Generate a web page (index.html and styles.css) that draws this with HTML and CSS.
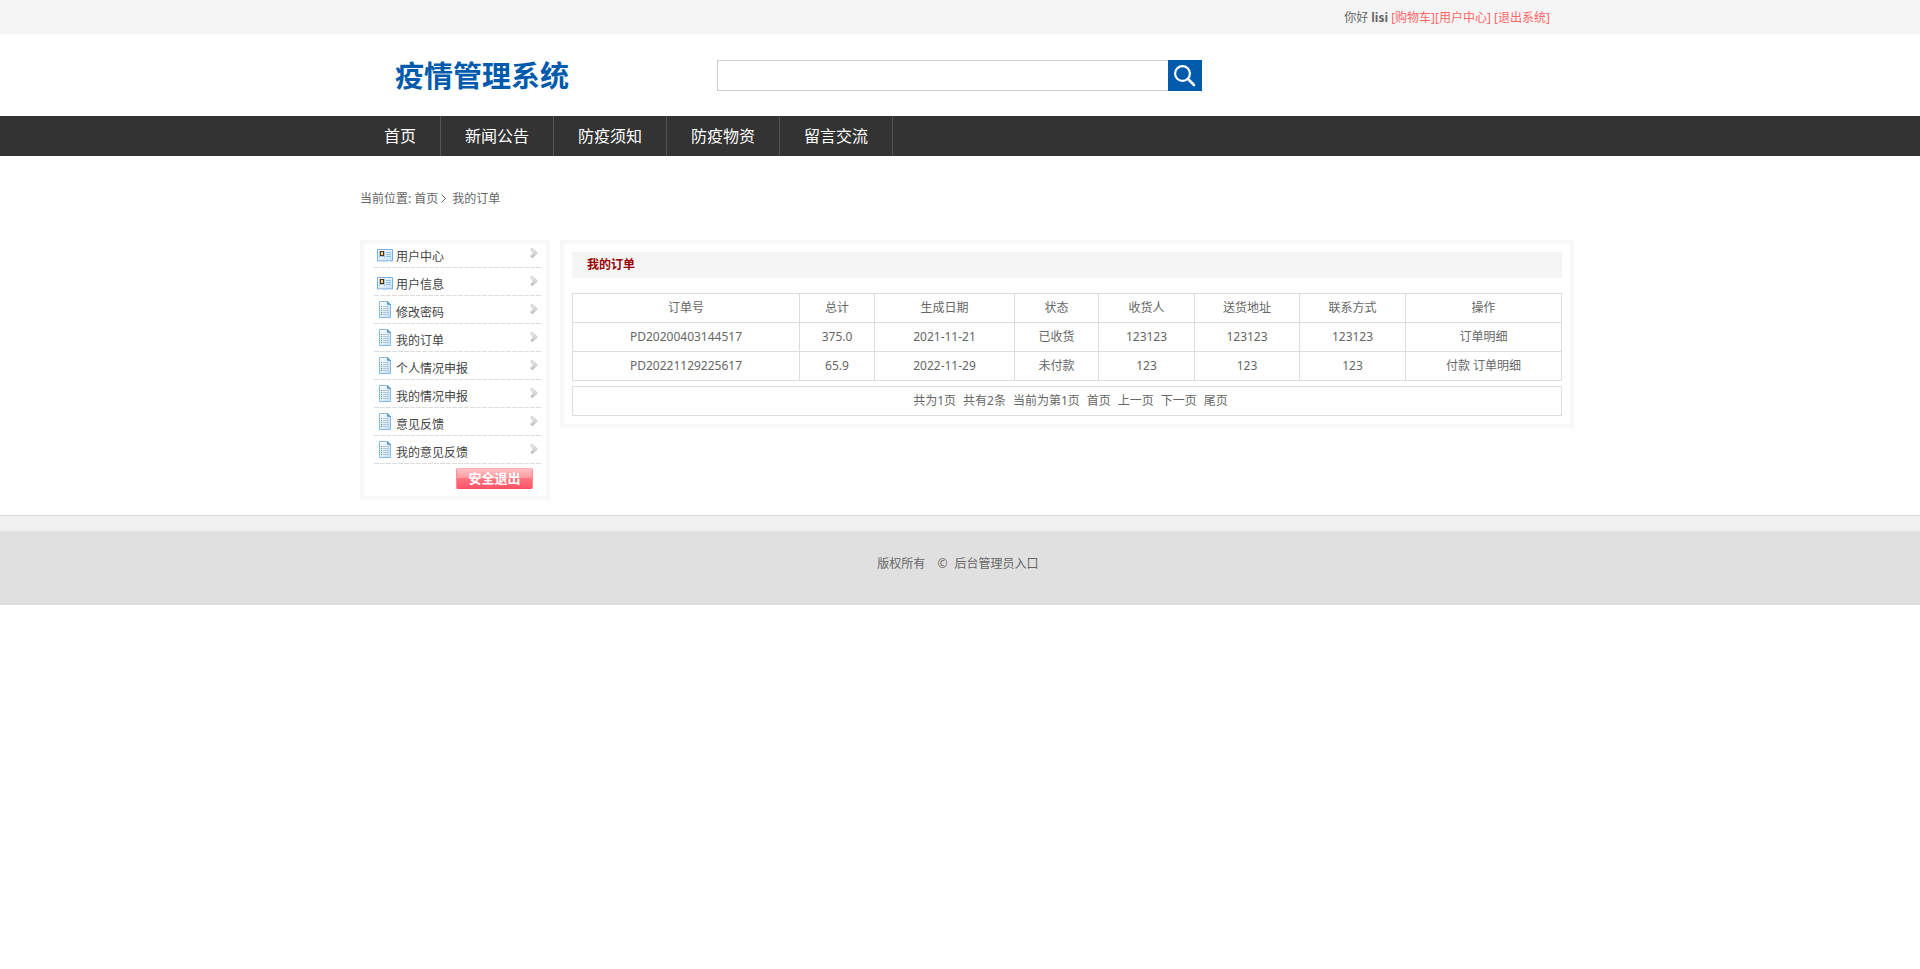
FILE: index.html
```html
<!DOCTYPE html>
<html lang="zh-CN">
<head>
  <meta charset="UTF-8" />
  <meta name="viewport" content="width=device-width, initial-scale=1.0"/>
  <title>疫情管理系统</title>
  <link rel="stylesheet" href="styles.css">
</head>
<body>
  <!-- shared icons -->
  <svg class="sprite" aria-hidden="true">
    <defs>
      <linearGradient id="paper" x1="0" y1="0" x2="1" y2="1">
        <stop offset="0" stop-color="#ffffff"/>
        <stop offset="1" stop-color="#c2e0fa"/>
      </linearGradient>
      <linearGradient id="silver" x1="0" y1="0" x2="0" y2="1">
        <stop offset="0" stop-color="#ececec"/>
        <stop offset="1" stop-color="#c0c0c0"/>
      </linearGradient>
    </defs>
    <symbol id="icon-card" viewBox="0 0 16 13">
      <path d="M.5.5h15v11.5h-2l-1-1-1 1h-7l-1-1-1 1h-2z" fill="url(#paper)" stroke="#78aee0"/>
      <rect x="2" y="2" width="6" height="7" fill="#9cc8ef"/>
      <rect x="3" y="2" width="4" height="5" fill="#4a3620"/>
      <rect x="4" y="3" width="2" height="3" fill="#ffd88a"/>
      <path d="M3 8.500h4" stroke="#fff"/>
      <path d="M9 3.500h5M9 5.500h5M9 7.500h5" stroke="#92bfe8"/>
    </symbol>
    <symbol id="icon-doc" viewBox="0 0 16 17">
      <path d="M2.500.5h8l3 3v13h-11z" fill="url(#paper)" stroke="#86b8e6"/>
      <path d="M10.500.5v3h3z" fill="#5f9bd3" stroke="#5f9bd3"/>
      <path d="M4 5.500h1M4 7.500h1M4 9.500h1M4 11.500h1M4 13.500h1" stroke="#3f9d58"/>
      <path d="M6 5.500h6M6 7.500h6M6 9.500h6M6 11.500h6M6 13.500h6" stroke="#b4c8da"/>
    </symbol>
    <symbol id="icon-arrow" viewBox="0 0 8 10">
      <path d="M1 .5h2l4.500 4.500L3 9.500H1v-2l2.500-2.500L1 2.500z" fill="url(#silver)" stroke="#c4c4c4" stroke-width=".6"/>
    </symbol>
  </svg>

  <div class="topbar">
    <div class="container topbar-inner">
      <p>你好 <b>lisi</b> <a href="#">[购物车]</a><a href="#">[用户中心]</a> <a href="#">[退出系统]</a></p>
    </div>
  </div>

  <header class="container header">
    <h1 class="logo">疫情管理系统</h1>
    <form class="search">
      <input type="text" name="keyword" aria-label="搜索" />
      <button type="submit" aria-label="搜索">
        <svg width="34" height="31" viewBox="0 0 34 31">
          <circle cx="14.500" cy="13.500" r="7.400" fill="none" stroke="#fff" stroke-width="2.200"/>
          <path d="M20 19l6 6" stroke="#fff" stroke-width="2.600" stroke-linecap="round"/>
        </svg>
      </button>
    </form>
  </header>

  <nav class="nav">
    <div class="container nav-inner">
      <a href="#">首页</a>
      <a href="#">新闻公告</a>
      <a href="#">防疫须知</a>
      <a href="#">防疫物资</a>
      <a href="#">留言交流</a>
    </div>
  </nav>

  <div class="container">
    <div class="breadcrumb">
      <span>当前位置:</span>
      <a href="#">首页</a>
      <svg width="5" height="9" viewBox="0 0 5 9"><path d="M.5.5l4 4-4 4" fill="none" stroke="#666"/></svg>
      <span class="current">我的订单</span>
    </div>

    <div class="content">
      <aside class="sidebar">
        <ul>
          <li><a href="#"><svg class="icon-card"><use href="#icon-card"/></svg><span>用户中心</span><svg class="arrow"><use href="#icon-arrow"/></svg></a></li>
          <li><a href="#"><svg class="icon-card"><use href="#icon-card"/></svg><span>用户信息</span><svg class="arrow"><use href="#icon-arrow"/></svg></a></li>
          <li><a href="#"><svg class="icon-doc"><use href="#icon-doc"/></svg><span>修改密码</span><svg class="arrow"><use href="#icon-arrow"/></svg></a></li>
          <li><a href="#"><svg class="icon-doc"><use href="#icon-doc"/></svg><span>我的订单</span><svg class="arrow"><use href="#icon-arrow"/></svg></a></li>
          <li><a href="#"><svg class="icon-doc"><use href="#icon-doc"/></svg><span>个人情况申报</span><svg class="arrow"><use href="#icon-arrow"/></svg></a></li>
          <li><a href="#"><svg class="icon-doc"><use href="#icon-doc"/></svg><span>我的情况申报</span><svg class="arrow"><use href="#icon-arrow"/></svg></a></li>
          <li><a href="#"><svg class="icon-doc"><use href="#icon-doc"/></svg><span>意见反馈</span><svg class="arrow"><use href="#icon-arrow"/></svg></a></li>
          <li><a href="#"><svg class="icon-doc"><use href="#icon-doc"/></svg><span>我的意见反馈</span><svg class="arrow"><use href="#icon-arrow"/></svg></a></li>
        </ul>
        <button type="button" class="logout-btn">安全退出</button>
      </aside>

      <main class="panel">
        <h2>我的订单</h2>
        <table class="orders">
          <colgroup>
            <col class="col-no"><col class="col-total"><col class="col-date"><col class="col-status">
            <col class="col-name"><col class="col-address"><col class="col-phone"><col class="col-action">
          </colgroup>
          <thead>
            <tr>
              <th>订单号</th>
              <th>总计</th>
              <th>生成日期</th>
              <th>状态</th>
              <th>收货人</th>
              <th>送货地址</th>
              <th>联系方式</th>
              <th>操作</th>
            </tr>
          </thead>
          <tbody>
            <tr>
              <td>PD20200403144517</td>
              <td>375.0</td>
              <td>2021-11-21</td>
              <td>已收货</td>
              <td>123123</td>
              <td>123123</td>
              <td>123123</td>
              <td><a href="#">订单明细</a></td>
            </tr>
            <tr>
              <td>PD20221129225617</td>
              <td>65.9</td>
              <td>2022-11-29</td>
              <td>未付款</td>
              <td>123</td>
              <td>123</td>
              <td>123</td>
              <td><a href="#">付款</a> <a href="#">订单明细</a></td>
            </tr>
          </tbody>
        </table>
        <div class="pager">
          <span>共为1页</span>
          <span>共有2条</span>
          <span>当前为第1页</span>
          <a href="#">首页</a>
          <a href="#">上一页</a>
          <a href="#">下一页</a>
          <a href="#">尾页</a>
        </div>
      </main>
    </div>
  </div>

  <footer class="footer">
    <p><span>版权所有</span> <span class="copy">©</span> <a href="#">后台管理员入口</a></p>
  </footer>
</body>
</html>
```
FILE: styles.css
```css
* {
  box-sizing: border-box;
}

body {
  font-family: "Noto Sans", "Noto Sans CJK SC", sans-serif;
  font-size: 12px;
  line-height: 18px;
  margin: 0;
  color: #666;
  background-color: #fff;
}

h1, h2, p, ul {
  margin: 0;
  padding: 0;
}

ul {
  list-style: none;
}

a {
  color: inherit;
  text-decoration: none;
}

svg {
  flex: none;
}

.sprite {
  position: absolute;
  width: 0;
  height: 0;
}

.container {
  max-width: 1200px;
  margin: 0 auto;
}

/* top bar */
.topbar {
  background-color: #f5f5f5;
}

.topbar-inner {
  padding: 9px 10px 7px;
  text-align: right;
}

.topbar a {
  color: #ff6666;
}

/* logo + search */
.header {
  display: flex;
  align-items: center;
  height: 82px;
}

.logo {
  width: 357px;
  padding: 2px 0 0 35px;
  font-size: 29px;
  line-height: 40px;
  color: #005bac;
}

.search {
  display: flex;
  width: 485px;
}

.search input {
  flex: 1;
  height: 31px;
  padding: 0 8px;
  border: 1px solid #ccc;
  border-right: none;
  outline: none;
}

.search button {
  width: 34px;
  height: 31px;
  padding: 0;
  border: none;
  background-color: #005bac;
  cursor: pointer;
}

.search svg {
  display: block;
}

/* main nav */
.nav {
  background-color: #333;
}

.nav-inner {
  display: flex;
}

.nav a {
  padding: 0 24px;
  border-right: 1px solid #555;
  font-size: 16px;
  line-height: 40px;
  color: #fff;
}

.nav a:hover {
  background-color: #005bac;
}

.breadcrumb {
  display: flex;
  align-items: center;
  gap: 3px;
  height: 84px;
  padding-top: 1px;
}

.breadcrumb .current {
  margin-left: 3px;
}

.content {
  display: flex;
  align-items: flex-start;
  gap: 10px;
  margin-right: -14px;
  padding-bottom: 15px;
}

/* user menu */
.sidebar {
  flex: none;
  width: 190px;
  padding: 0 5px 7px 10px;
  border: 4px solid #f8f8f8;
}

.sidebar li {
  display: flex;
  align-items: flex-end;
  height: 28px;
  padding: 0 3px 1px;
  background: repeating-linear-gradient(90deg, #ddd 0 5px, transparent 5px 6px) bottom / 100% 1px no-repeat;
}

.sidebar li:first-child {
  height: 24px;
}

.sidebar a {
  display: flex;
  flex: 1;
  align-items: flex-end;
  color: #444;
}

.sidebar span {
  padding-bottom: 1px;
}

.sidebar .icon-card {
  width: 16px;
  height: 13px;
  margin: 0 3px 5px 0;
}

.sidebar .icon-doc {
  width: 16px;
  height: 17px;
  margin: 0 3px 5px 0;
}

.sidebar .arrow {
  width: 8px;
  height: 10px;
  margin: 0 0 9px auto;
}

.logout-btn {
  display: block;
  width: 77px;
  height: 21px;
  margin: 4px 8px 0 auto;
  padding: 0;
  border: 1px solid #ff8a94;
  border-top-color: #ffb0b4;
  border-bottom-color: #ff4d62;
  border-radius: 2px;
  background: linear-gradient(#ffc0c2, #ff9ca2 45%, #ff7480 50%, #ff5468);
  font-family: inherit;
  font-size: 13px;
  font-weight: bold;
  line-height: 19px;
  color: #fff;
  cursor: pointer;
}

/* orders */
.panel {
  flex: 1;
  padding: 8px;
  border: 4px solid #f8f8f8;
}

.panel h2 {
  margin-bottom: 15px;
  padding: 0 15px;
  font-size: 12px;
  line-height: 26px;
  color: #990000;
  background-color: #f5f5f5;
}

.orders {
  width: 100%;
  table-layout: fixed;
  border-collapse: collapse;
}

.orders th,
.orders td {
  height: 29px;
  padding: 0;
  border: 1px solid #ddd;
  font-weight: normal;
  text-align: center;
}

.col-no { width: 227px; }
.col-total { width: 75px; }
.col-date { width: 140px; }
.col-status { width: 84px; }
.col-name { width: 96px; }
.col-address { width: 105px; }
.col-phone { width: 106px; }
.col-action { width: 156px; }

.pager {
  display: flex;
  justify-content: center;
  gap: 7px;
  margin-top: 5px;
  padding: 5px 0 5px 7px;
  border: 1px solid #ddd;
}

/* footer */
.footer {
  padding: 24px 0 32px;
  border-top: 1px solid #ddd;
  background: linear-gradient(#f1f1f1 0 15px, #e0e0e0 15px);
  text-align: center;
}

.footer p {
  padding: 15px 4px 0 0;
}

.footer .copy {
  margin: 0 4px 0 9px;
}
```
